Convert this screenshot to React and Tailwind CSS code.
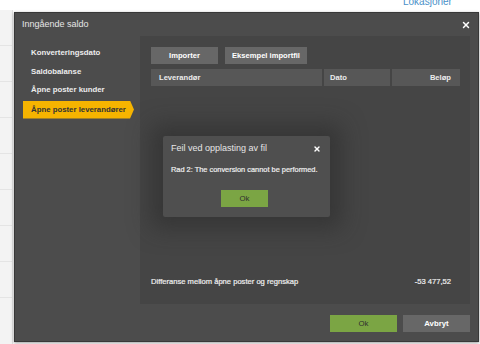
import { X } from "lucide-react";

const NAV = ["Konverteringsdato", "Saldobalanse", "Åpne poster kunder", "Åpne poster leverandører"];
const ACTIVE = 3;

export default function App() {
  return (
    <div className="relative w-[480px] h-[344px] overflow-hidden bg-white font-['Liberation_Sans',Arial,sans-serif]">
      {/* bakgrunnsside */}
      <div className="absolute left-0 top-[10px] bottom-0 w-[13px] bg-[#f3f3f3] border-r border-[#e2e2e2] flex flex-col">
        {[0, 1, 2, 3, 4, 5, 6, 7].map((i) => (
          <div key={i} className="h-[36px] border-b border-[#e4e4e4]" />
        ))}
      </div>
      <div className="absolute left-[403px] top-[-3px] text-[10px] leading-[10px] text-[#4a90c8]">Lokasjoner</div>

      {/* dialog */}
      <div className="absolute left-[14px] top-[12px] w-[465px] h-[330px] bg-[#4c4c4c] border border-[#383838] shadow-[0_1px_3px_rgba(0,0,0,0.4)] flex flex-col">
        <div className="h-[23px] flex items-center justify-between pl-[7px] pr-[7px]">
          <span className="text-[9px] text-[#e6e6e6]">Inngående saldo</span>
          <X size={10} strokeWidth={3.5} className="text-white" />
        </div>

        <div className="flex flex-1">
          <nav className="w-[125px] pt-[8px] pl-[8px] flex flex-col">
            {NAV.map((item, i) =>
              i === ACTIVE ? (
                <div key={item} className="relative h-[18px] mt-[1px] mr-[6px]">
                  <div className="h-full bg-[#f6b400] flex items-center pl-[8px] text-[7.8px] font-bold text-[#333] [clip-path:polygon(0_0,calc(100%-4px)_0,100%_50%,calc(100%-4px)_100%,0_100%)]">
                    {item}
                  </div>
                </div>
              ) : (
                <div key={item} className="h-[18.5px] flex items-center pl-[8px] text-[7.8px] font-bold text-[#ececec]">
                  {item}
                </div>
              )
            )}
          </nav>

          <div className="w-[330px] h-[268px] bg-[#454545] pt-[11px] pl-[11px] pr-[10px] flex flex-col">
            <div className="flex gap-[7px]">
              <button className="w-[67px] h-[17px] bg-[#676767] text-white text-[7.6px] font-bold">Importer</button>
              <button className="w-[82px] h-[17px] bg-[#676767] text-white text-[7.6px] font-bold">Eksempel importfil</button>
            </div>
            <div className="mt-[5px] h-[17px] flex gap-[2px] text-[7.6px] font-bold text-[#ececec]">
              <div className="flex-1 bg-[#575757] flex items-center pl-[8px]">Leverandør</div>
              <div className="w-[66px] bg-[#575757] flex items-center pl-[6px]">Dato</div>
              <div className="w-[68px] bg-[#575757] flex items-center justify-end pr-[9px]">Beløp</div>
            </div>
            <div className="flex-1" />
            <div className="flex justify-between pr-[9px] mb-[17px] text-[7.6px] text-[#f0f0f0] [-webkit-text-stroke:0.2px_#f0f0f0]">
              <span>Differanse mellom åpne poster og regnskap</span>
              <span>-53 477,52</span>
            </div>
          </div>
        </div>

        <div className="flex justify-end gap-[6px] pr-[8px] pb-[9px]">
          <button className="w-[67px] h-[17px] bg-[#7ba544] text-[#2f2f2f] text-[7.8px]">Ok</button>
          <button className="w-[67px] h-[17px] bg-[#676767] text-white text-[7.8px] font-bold">Avbryt</button>
        </div>
      </div>

      {/* feilmelding */}
      <div className="absolute left-[163px] top-[136px] w-[167px] h-[81px] bg-[#4f4f4f] rounded-[2px] shadow-[0_0_22px_12px_rgba(40,40,40,0.5)] flex flex-col">
        <div className="flex items-center justify-between pl-[8px] pr-[9px] pt-[5px] h-[20px]">
          <span className="text-[9px] text-[#e6e6e6]">Feil ved opplasting av fil</span>
          <X size={8} strokeWidth={4} className="text-white" />
        </div>
        <div className="pl-[8px] mt-[8px] text-[7.4px] text-[#f0f0f0] [-webkit-text-stroke:0.2px_#f0f0f0]">Rad 2: The conversion cannot be performed.</div>
        <div className="mt-[9px] ml-[58px]">
          <button className="w-[47px] h-[17px] bg-[#7ba544] text-[#2f2f2f] text-[7.8px]">Ok</button>
        </div>
      </div>
    </div>
  );
}
